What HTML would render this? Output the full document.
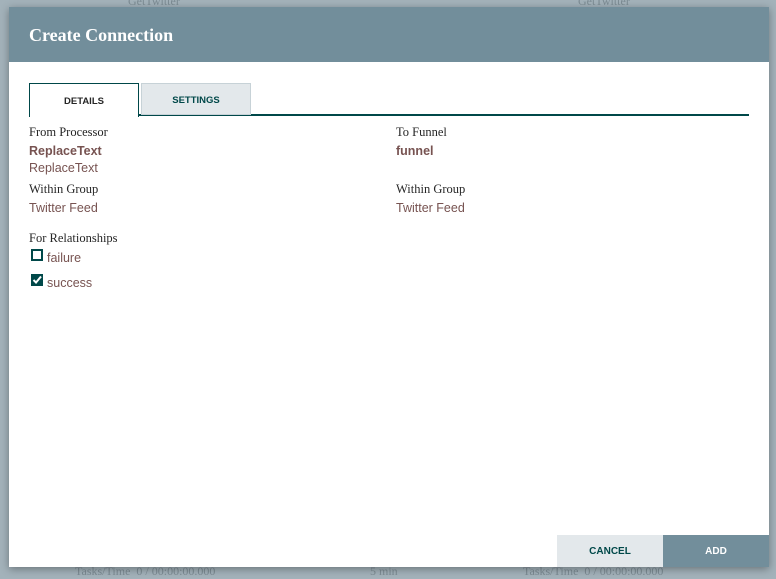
<!DOCTYPE html>
<html><head><style>
*{margin:0;padding:0;box-sizing:border-box}
body{width:776px;height:575px;overflow:hidden;background:#a3b2ba;position:relative;font-family:"Liberation Sans",sans-serif}
.bgtxt{position:absolute;color:#7d8c94;font-size:12px;font-family:"Liberation Serif",serif}
.dlg{position:absolute;left:9px;top:7px;width:760px;height:560px;background:#fff;box-shadow:0 2px 8px rgba(0,0,0,.35)}
.hdr{height:55px;background:#728e9b;color:#fff;font-family:"Liberation Serif",serif;font-weight:bold;font-size:18px;padding:18px 0 0 20px}
.tabs{position:absolute;left:20px;top:76px;width:720px;height:33px;border-bottom:2px solid #004849}
.tab{position:absolute;top:0;height:33px;font-size:9.5px;font-weight:bold;text-align:center;line-height:35px}
.t1{left:0;width:110px;border:1px solid #004849;border-bottom:none;background:#fff;color:#262626;height:34px}
.t2{left:112px;width:110px;height:32px;background:#e3e8eb;border:1px solid #c7d2d7;color:#004849;line-height:33px}
.lbl{position:absolute;font-family:"Liberation Serif",serif;font-size:12.5px;color:#262626}
.val{position:absolute;font-size:12.5px;color:#775351}
.b{font-weight:bold}
.cb{position:absolute;left:22px;width:12px;height:12px;border:2px solid #004849}
.btn{position:absolute;top:528px;height:32px;font-size:10px;font-weight:bold;text-align:center;line-height:34px}
</style></head><body>
<div class="bgtxt" style="left:128px;top:-6px">GetTwitter</div>
<div class="bgtxt" style="left:578px;top:-6px">GetTwitter</div>
<div class="bgtxt" style="left:75px;top:564px">Tasks/Time &nbsp;0 / 00:00:00.000</div>
<div class="bgtxt" style="left:370px;top:564px">5 min</div>
<div class="bgtxt" style="left:523px;top:564px">Tasks/Time &nbsp;0 / 00:00:00.000</div>
<div class="dlg">
<div class="hdr">Create Connection</div>
<div class="tabs"><div class="tab t1">DETAILS</div><div class="tab t2">SETTINGS</div></div>
<div class="lbl" style="left:20px;top:118px">From Processor</div>
<div class="val b" style="left:20px;top:137px">ReplaceText</div>
<div class="val" style="left:20px;top:154px">ReplaceText</div>
<div class="lbl" style="left:20px;top:175px">Within Group</div>
<div class="val" style="left:20px;top:194px">Twitter Feed</div>
<div class="lbl" style="left:387px;top:118px">To Funnel</div>
<div class="val b" style="left:387px;top:137px">funnel</div>
<div class="lbl" style="left:387px;top:175px">Within Group</div>
<div class="val" style="left:387px;top:194px">Twitter Feed</div>
<div class="lbl" style="left:20px;top:224px">For Relationships</div>
<div class="cb" style="top:242px"></div>
<div class="val" style="left:38px;top:244px">failure</div>
<div class="cb" style="top:267px;background:#004849"><svg width="10" height="10" viewBox="0 0 10 10" style="position:absolute;left:-1px;top:-1px"><path d="M1.5 5 L4 7.5 L9 1.5" stroke="#fff" stroke-width="2" fill="none"/></svg></div>
<div class="val" style="left:38px;top:269px">success</div>
<div class="btn" style="left:548px;width:106px;background:#e3e8eb;color:#004849">CANCEL</div>
<div class="btn" style="left:654px;width:106px;background:#728e9b;color:#fff">ADD</div>
</div>
</body></html>
